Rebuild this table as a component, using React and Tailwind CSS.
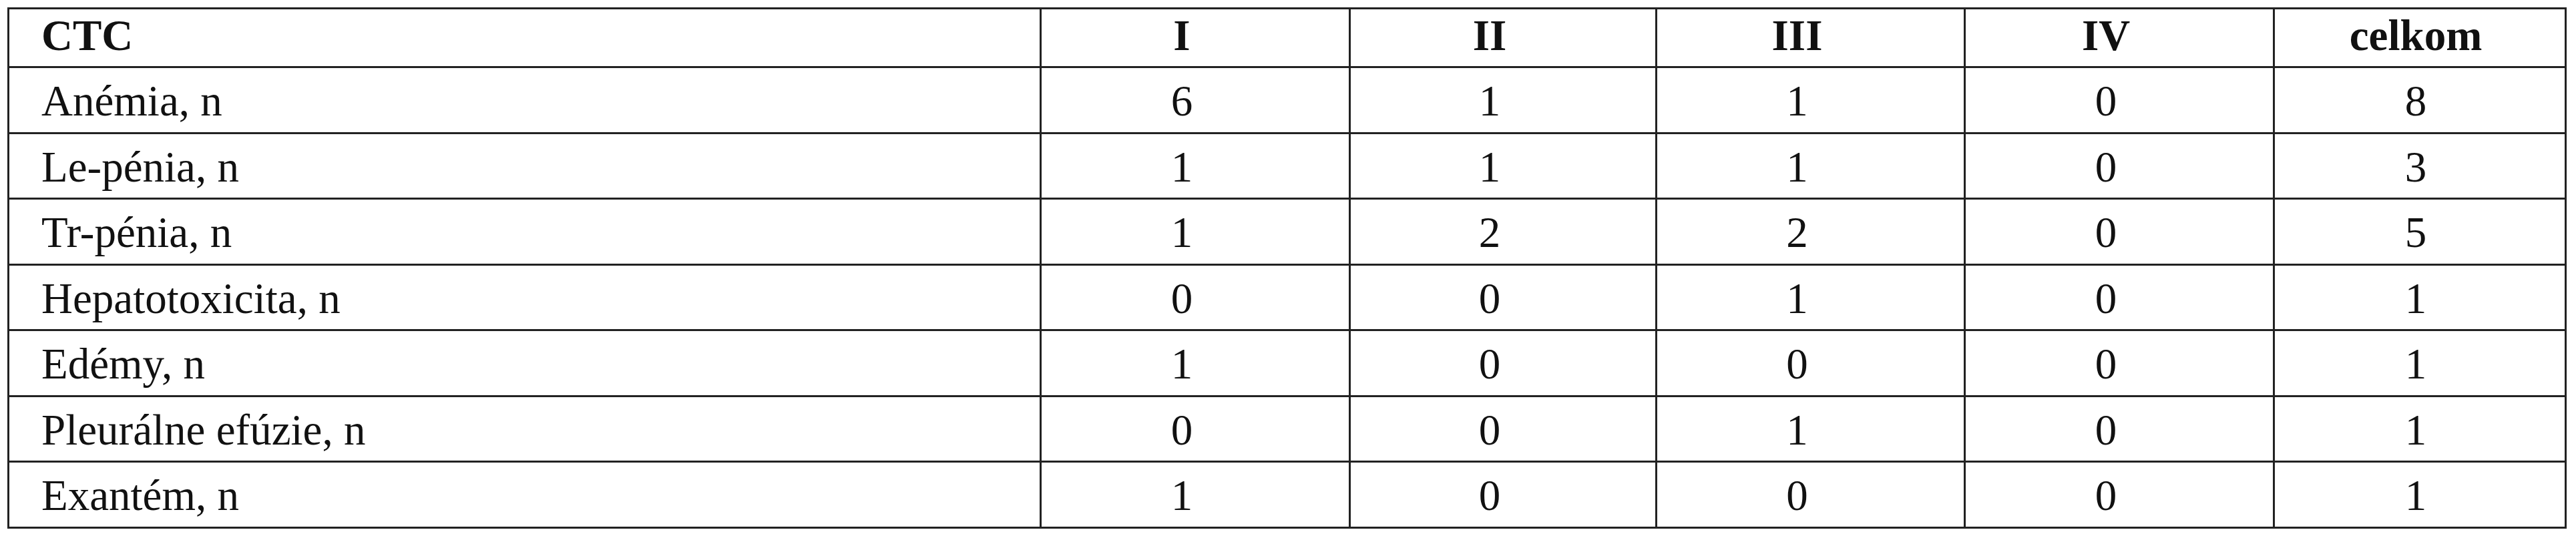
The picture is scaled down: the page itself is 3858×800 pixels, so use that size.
import React from "react";

const rows = [
  ["Anémia, n", 6, 1, 1, 0, 8],
  ["Le-pénia, n", 1, 1, 1, 0, 3],
  ["Tr-pénia, n", 1, 2, 2, 0, 5],
  ["Hepatotoxicita, n", 0, 0, 1, 0, 1],
  ["Edémy, n", 1, 0, 0, 0, 1],
  ["Pleurálne efúzie, n", 0, 0, 1, 0, 1],
  ["Exantém, n", 1, 0, 0, 0, 1],
];

const head = ["CTC", "I", "II", "III", "IV", "celkom"];

const Cell = ({ i, bold, children, header }) => {
  if (i === 0) {
    return (
      <div
        className={`bg-white flex items-center pl-[48px] ${header ? "pb-[6px]" : "pt-[4px]"} ${bold ? "font-bold" : ""}`}
      >
        {children}
      </div>
    );
  }
  return (
    <div
      className={`bg-white flex items-center justify-center ${i === 5 ? "pr-[12px]" : "pr-[40px]"} ${header ? "pb-[6px]" : "pt-[4px]"} ${bold ? "font-bold" : ""}`}
    >
      {children}
    </div>
  );
};

const App = () => {
  return (
    <div className="w-[3858px] h-[800px] bg-white pt-[11px] pl-[11px]">
      <div
        className="grid w-max bg-[#222] gap-[3px] p-[3px] grid-cols-[1543px_460px_456px_459px_460px_434px] grid-rows-[85px_repeat(7,95.5px)] text-[65px] leading-none text-[#111]"
        style={{ fontFamily: '"Liberation Serif", "Times New Roman", serif' }}
      >
        {head.map((h, i) => (
          <Cell key={h} i={i} bold header>
            {h}
          </Cell>
        ))}
        {rows.map((r) =>
          r.map((v, i) => (
            <Cell key={r[0] + i} i={i}>
              {v}
            </Cell>
          ))
        )}
      </div>
    </div>
  );
};

export default App;
